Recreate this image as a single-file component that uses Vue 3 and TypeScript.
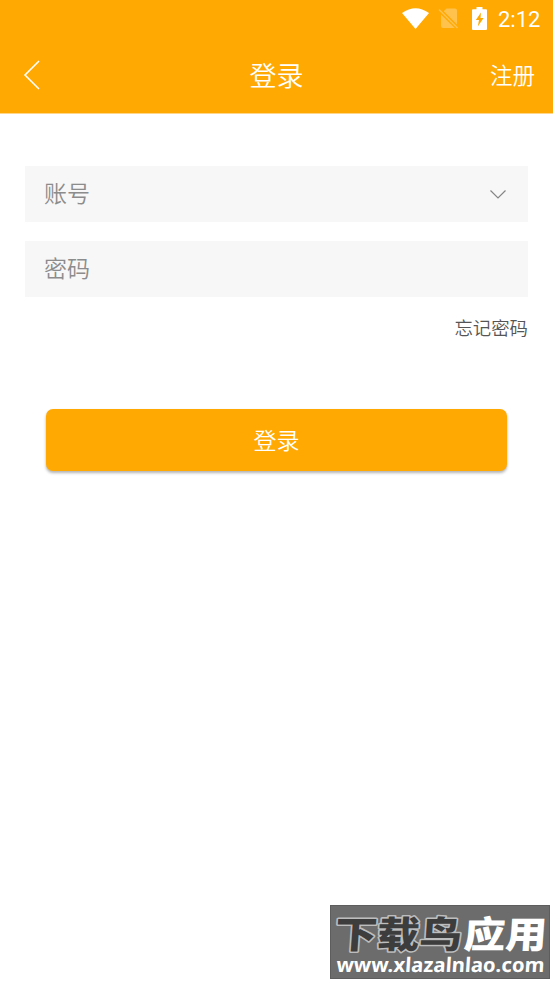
<script setup lang="ts">
interface Field {
  id: string
  label: string
  expandable: boolean
}

const fields: Field[] = [
  { id: 'account', label: '账号', expandable: true },
  { id: 'password', label: '密码', expandable: false },
]
</script>

<template>
  <main class="screen">
    <header class="top">
      <div class="status">
        <svg class="wifi" width="27" height="22" viewBox="0 0 27 22">
          <path d="M0 5Q13.5-4.6 27 5L13.5 21Z" fill="#fff" />
        </svg>
        <svg class="sim" width="21" height="22" viewBox="0 0 21 22">
          <path d="M8.5 .5H17q2 0 2 2v14L5.7 3.3ZM3 6.6 16.8 20H5q-2 0-2-2Z" fill="#ffc24d" />
          <path d="M1 1.5 19.5 20" stroke="#ffc24d" stroke-width="1.6" />
        </svg>
        <svg class="battery" width="15" height="23" viewBox="0 0 15 23">
          <path d="M4.5 0h6v2.300H14q1 0 1 1V22q0 1-1 1H1q-1 0-1-1V3.300q0-1 1-1h3.500Z" fill="#fff" />
          <path d="M9 5.500 3.800 13H7L5.800 19.500 11.600 11H8.500Z" fill="#ffa902" />
        </svg>
        <span class="time">2:12</span>
      </div>
      <nav class="bar">
        <svg class="back" width="18" height="32" viewBox="0 0 18 32">
          <path d="M16 1 2 15 16 29" fill="none" stroke="#fff" stroke-width="1.6" />
        </svg>
        <h1 class="title">登录</h1>
        <span class="register">注册</span>
      </nav>
    </header>

    <section class="form">
      <div v-for="field in fields" :key="field.id" class="field">
        <span>{{ field.label }}</span>
        <svg v-if="field.expandable" width="18" height="12" viewBox="0 0 18 12">
          <path d="M1.5 1.5 9 9 16.5 1.5" fill="none" stroke="#858585" stroke-width="1.2" />
        </svg>
      </div>
      <span class="forgot">忘记密码</span>
      <button class="submit" type="button">登录</button>
    </section>

    <footer class="brand">
      <svg width="220" height="74" viewBox="0 0 220 74">
        <rect x=".5" y=".5" width="219" height="73" fill="#6c6c6c" stroke="#5d5d5d" />
        <g class="brand-name" transform="translate(0 43) skewX(-4)">
          <text class="outline" x="4" y="0" textLength="127" lengthAdjust="spacingAndGlyphs">下载鸟</text>
          <text class="dark" x="4" y="0" textLength="127" lengthAdjust="spacingAndGlyphs">下载鸟</text>
          <text class="light" x="133" y="0" textLength="83" lengthAdjust="spacingAndGlyphs">应用</text>
        </g>
        <g transform="translate(0 67) skewX(-4)">
          <text class="url" x="6" y="0" textLength="208" lengthAdjust="spacingAndGlyphs">www.xlazalnlao.com</text>
        </g>
      </svg>
    </footer>
  </main>
</template>

<style>
body {
  background: #fff;
}
</style>

<style scoped>
.screen {
  box-sizing: border-box;
  width: 100%;
  height: 983px;
  display: flex;
  flex-direction: column;
  background: #fff;
  font-family: Roboto, "Noto Sans CJK SC", sans-serif;
  font-weight: 350;
}
.top {
  height: 113px;
  background: #ffa902;
  border-bottom: 1px solid #ffd68a;
  color: #fff;
}
.status {
  height: 38px;
  display: flex;
  align-items: center;
  justify-content: flex-end;
  padding-right: 12px;
}
.sim {
  margin-left: 9px;
}
.battery {
  margin: 0 0 2px 13px;
}
.time {
  width: 43px;
  margin-left: 11px;
  font-size: 22px;
  font-weight: 400;
  line-height: 38px;
  padding-top: 2px;
  white-space: nowrap;
}
.bar {
  display: grid;
  grid-template-columns: 1fr auto 1fr;
  align-items: center;
  height: 75px;
  padding: 0 18px 0 23px;
}
.title {
  margin: 0 0 0 -5px;
  padding-top: 2px;
  font-size: 27px;
  font-weight: 350;
  line-height: 40px;
}
.register {
  justify-self: end;
  font-size: 22.5px;
  line-height: 34px;
}
.form {
  display: flex;
  flex-direction: column;
  padding: 52px 25px 0;
}
.field {
  box-sizing: border-box;
  height: 56px;
  margin-bottom: 19px;
  padding: 2px 21px 0 19px;
  display: flex;
  align-items: center;
  justify-content: space-between;
  background: #f7f7f7;
  color: #8c8c8c;
  font-size: 23px;
  line-height: 34px;
}
.forgot {
  align-self: flex-end;
  color: #555;
  font-size: 18.4px;
  line-height: 26px;
}
.submit {
  height: 62px;
  margin: 67px 21px 0;
  padding: 0 0 2px;
  border: 0;
  border-radius: 7px;
  background: #ffa902;
  box-shadow: 0 2px 3px rgba(0, 0, 0, 0.3);
  color: #fff;
  font: inherit;
  font-size: 23px;
}
.brand {
  display: flex;
  justify-content: flex-end;
  margin-top: auto;
  padding: 0 3px 4px 0;
}
.brand-name {
  font-family: "Noto Sans CJK SC", sans-serif;
  font-size: 37px;
  font-weight: 900;
}
.outline {
  fill: none;
  stroke: #bdbdbd;
  stroke-width: 3;
  stroke-linejoin: round;
}
.dark {
  fill: #3d3d3d;
}
.light {
  fill: #fff;
}
.url {
  fill: #fff;
  font-family: "Noto Sans", "Open Sans", sans-serif;
  font-size: 20px;
  font-weight: 700;
}
</style>
